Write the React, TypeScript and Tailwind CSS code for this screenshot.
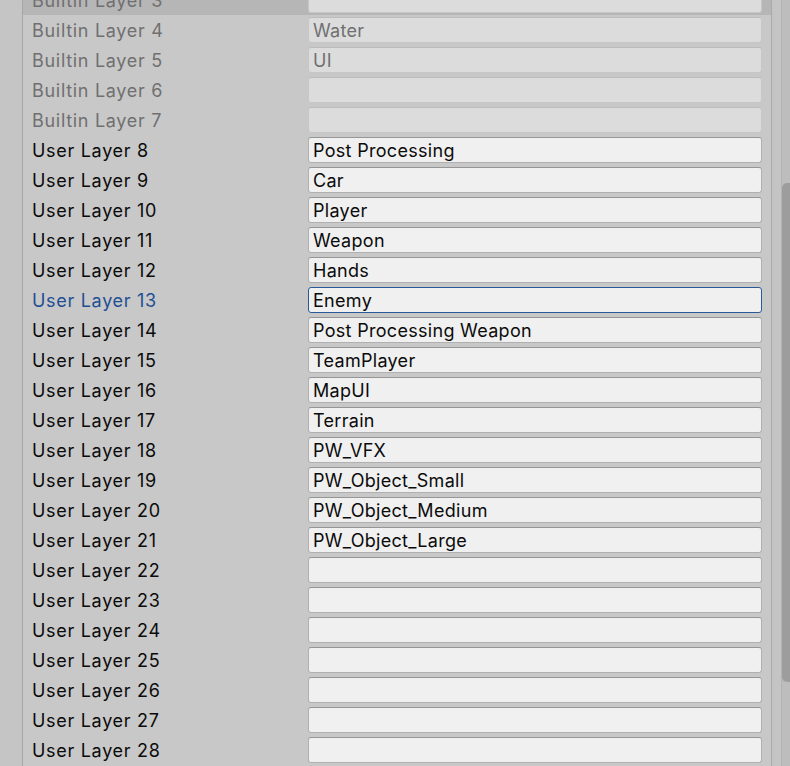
import React from 'react';

type Layer = { label: string; name: string; builtin: boolean };

const names: Record<number, string> = {
    4: 'Water',
    5: 'UI',
    8: 'Post Processing',
    9: 'Car',
    10: 'Player',
    11: 'Weapon',
    12: 'Hands',
    13: 'Enemy',
    14: 'Post Processing Weapon',
    15: 'TeamPlayer',
    16: 'MapUI',
    17: 'Terrain',
    18: 'PW_VFX',
    19: 'PW_Object_Small',
    20: 'PW_Object_Medium',
    21: 'PW_Object_Large',
};

const layers: Layer[] = [];
for (let i = 3; i <= 28; i++) {
    const builtin = i < 8;
    layers.push({
        label: `${builtin ? 'Builtin' : 'User'} Layer ${i}`,
        name: names[i] ?? '',
        builtin,
    });
}

function LayerRow({ layer, index }: { layer: Layer; index: number }) {
    const selected = index === 0;
    const focused = layer.label === 'User Layer 13';

    let labelColor = 'text-[#0b0b0b]';
    if (layer.builtin) labelColor = 'text-[#707070]';
    if (focused) labelColor = 'text-[#1f4f94]';

    let fieldClass = 'bg-[#f0f0f0] border-[#b0b0b0] border-t-[#969696] text-[#0b0b0b]';
    if (layer.builtin) fieldClass = 'bg-[#dcdcdc] border-[#c6c6c6] border-t-[#bcbcbc] text-[#707070]';
    if (focused) fieldClass = 'bg-[#f0f0f0] border-[#2a5a96] text-[#0b0b0b]';

    return (
        <div className={`flex h-[30px] items-center pl-[9px] pr-[9px] ${selected ? 'bg-[#b6b6b6]' : ''}`}>
            <div className={`w-[276px] shrink-0 pt-[2px] text-[18px] leading-none tracking-[0.7px] ${labelColor}`}>{layer.label}</div>
            <div className={`flex h-[26px] flex-1 items-center rounded-[3px] border pl-1 pt-[2px] text-[18px] leading-none tracking-[0.3px] ${fieldClass}`}>
                {layer.name}
            </div>
        </div>
    );
}

export default function App() {
    return (
        <div
            className="flex h-[766px] w-[790px] overflow-hidden bg-[#c8c8c8]"
            style={{ fontFamily: 'Inter, "Noto Sans", sans-serif' }}
        >
            <div className="w-[22px] shrink-0 bg-[#c5c5c5]" />
            <div className="w-px shrink-0 bg-[#a6a6a6]" />
            <div className="flex-1">
                <div className="-mt-[15px]">
                    {layers.map((layer, i) => (
                        <LayerRow key={layer.label} layer={layer} index={i} />
                    ))}
                </div>
            </div>
            <div className="w-px shrink-0 bg-[#a9a9a9]" />
            <div className="w-[9px] shrink-0 bg-[#c4c4c4]" />
            <div className="w-px shrink-0 bg-[#b3b3b3]" />
            <div className="w-[8px] shrink-0 bg-[#bdbdbd] pt-[183px]">
                <div className="h-[499px] rounded-l-[5px] bg-[#9d9d9d]" />
            </div>
        </div>
    );
}
